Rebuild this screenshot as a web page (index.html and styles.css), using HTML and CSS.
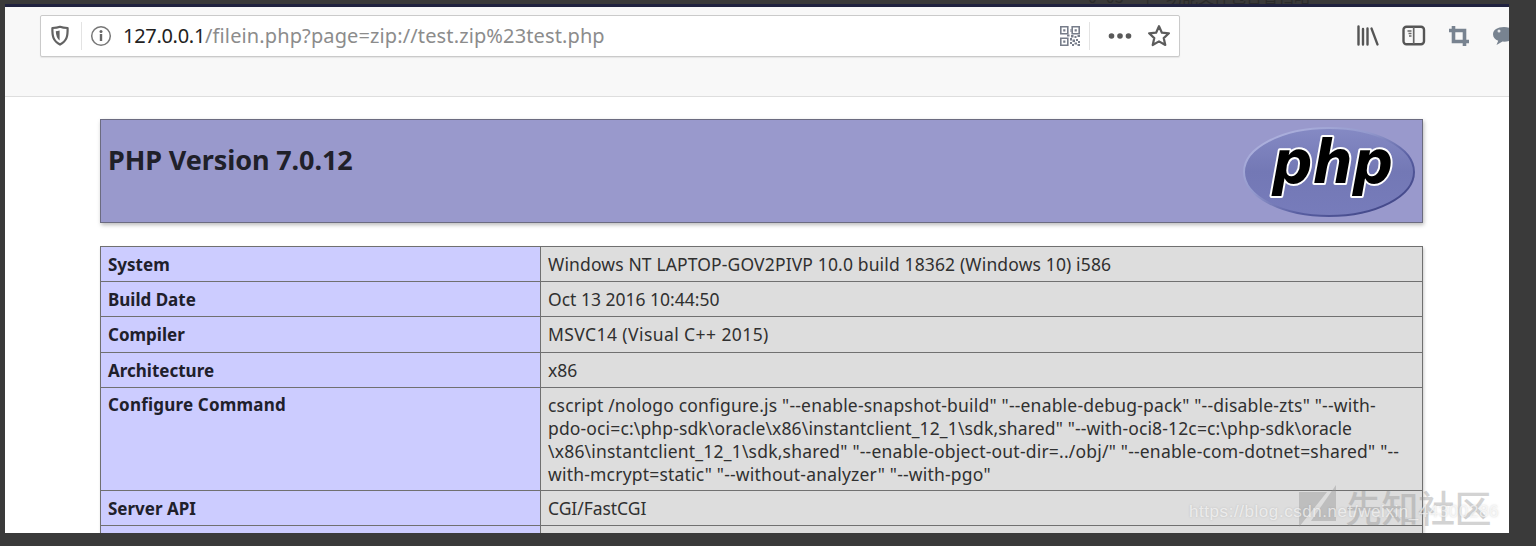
FILE: index.html
```html
<!DOCTYPE html>
<html lang="en">
<head>
<meta charset="utf-8">
<title>phpinfo()</title>
<link rel="stylesheet" href="styles.css">
</head>
<body>
<div class="desktop">
  <div class="backdrop"><span class="bd1">0_03</span><span class="bd2">|</span><span class="bd3">功能文件包含省扫略</span></div>
  <div class="window">
    <header class="toolbar">
      <div class="urlbar">
        <svg class="shield" width="20" height="22" viewBox="0 0 20 22"><path d="M10 1.8 C7.5 2.8 5 3 2.4 3 C2.2 11 3 16 10 19.6 C17 16 17.800 11 17.600 3 C15 3 12.500 2.800 10 1.800Z" fill="none" stroke="#626262" stroke-width="2.200" stroke-linejoin="round"/><path d="M9.600 5.500 Q7.500 6.200 5.800 6.300 Q6 13 9.600 15.500Z" fill="#626262"/></svg>
        <i class="sep sep1"></i>
        <svg class="info" width="22" height="22" viewBox="0 0 22 22"><circle cx="11" cy="11" r="9.300" fill="none" stroke="#777" stroke-width="1.500"/><circle cx="11" cy="6.500" r="1.500" fill="#666"/><path d="M11 9v7" fill="none" stroke="#666" stroke-width="2.400"/></svg>
        <span class="url"><b>127.0.0.1</b>/filein.php?page=zip://test.zip%23test.php</span>
        <svg class="qr" width="22" height="22" viewBox="0 0 22 22"><g fill="none" stroke="#777d8a" stroke-width="1.600"><path d="M1.800 1.800h7v7h-7zM13.200 1.800h7v7h-7zM1.800 13.200h7v7h-7z"/></g><path fill="#777d8a" d="M4.200 4.200h2.200v2.200H4.200zM15.600 4.200h2.200v2.200h-2.200zM4.200 15.600h2.200v2.200H4.200zM8 9.500h2.500v2H8zM11.500 4h1v3h-1zM12 10h2.500v2.500H12zM15.500 11h2v2h-2zM18.500 10h2.500v2h-2.500zM11 13h2v2.500h-2zM13.500 14.500h2.500V17h-2.500zM17 14h2v2h-2zM19 16h2v2h-2zM11 17h2v2h-2zM15.500 17.500h2.500v2h-2.500zM13 19h2v2h-2zM18.500 19h2.500v2h-2.500z"/></svg>
        <i class="sep sep2"></i>
        <svg class="dots" width="26" height="8" viewBox="0 0 26 8"><g fill="#595959"><circle cx="4.500" cy="4" r="2.800"/><circle cx="13" cy="4" r="2.800"/><circle cx="21.500" cy="4" r="2.800"/></g></svg>
        <svg class="star" width="24" height="24" viewBox="0 0 24 24"><path d="M12 2.200 L14.900 8.700 L21.900 9.300 L16.700 14.100 L18.300 21 L12 17.400 L5.700 21 L7.300 14.100 L2.100 9.300 L9.100 8.700Z" fill="none" stroke="#5c5c5c" stroke-width="2.200" stroke-linejoin="round"/></svg>
      </div>
      <div class="tools">
        <svg class="lib" width="24" height="22" viewBox="0 0 24 22"><path d="M2.500 1.500v18M7 4v15.500M11.500 3.500v16" stroke="#555" stroke-width="2.400" stroke-linecap="round"/><path d="M15.500 3.500 L21.500 19.500" stroke="#555" stroke-width="2.300" stroke-linecap="round"/></svg>
        <svg class="side" width="24" height="22" viewBox="0 0 24 22"><rect x="1.500" y="1.800" width="20.500" height="17.400" rx="3" fill="none" stroke="#555" stroke-width="2.400"/><path d="M11.700 2v17" stroke="#666" stroke-width="1.700"/><path d="M5.500 6h4M6.500 8.500h3M7 11h2.500" stroke="#666" stroke-width="1.300"/></svg>
        <svg class="crop" width="22" height="22" viewBox="0 0 22 22"><path d="M1 5.500h15.500V21M5.500 1v15.500H21" fill="none" stroke="#788390" stroke-width="3.600"/></svg>
        <svg class="chat" width="24" height="22" viewBox="0 0 24 22"><path d="M12 2C5.500 2 1 5 1 9.200c0 3.200 2.200 5.500 5.200 6.500L4.500 20l6-3.400C18 17 23 14 23 9.200S18 2 12 2z" fill="#788390"/><circle cx="7" cy="6" r="1.500" fill="#e4e6e9"/></svg>
      </div>
    </header>
    <main class="page">
      <section class="banner">
        <h1><span class="title">PHP Version 7.0.12</span></h1>
        <svg class="logo" width="174" height="94" viewBox="0 0 174 94">
          <defs>
            <linearGradient id="rim" x1="0" y1="0" x2="1" y2="1"><stop offset="0" stop-color="#b9bce5"/><stop offset=".4" stop-color="#9298cc"/><stop offset=".65" stop-color="#575da0"/><stop offset="1" stop-color="#393d7d"/></linearGradient>
            <linearGradient id="face" x1="0" y1="0" x2="0" y2="1"><stop offset="0" stop-color="#858ac4"/><stop offset=".5" stop-color="#7378b5"/><stop offset="1" stop-color="#777cbb"/></linearGradient>
          </defs>
          <ellipse cx="87" cy="47" rx="85" ry="44" fill="url(#face)" stroke="url(#rim)" stroke-width="2"/>
          <text class="wordmark" x="30" y="58" textLength="121" lengthAdjust="spacingAndGlyphs">php</text>
        </svg>
      </section>
      <table class="info-table">
        <tr><th><span class="k1">System</span></th><td><span class="v1">Windows NT LAPTOP-GOV2PIVP 10.0 build 18362 (Windows 10) i586</span></td></tr>
        <tr><th><span class="k2">Build Date</span></th><td><span class="v2">Oct 13 2016 10:44:50</span></td></tr>
        <tr><th><span class="k3">Compiler</span></th><td><span class="v3">MSVC14 (Visual C++ 2015)</span></td></tr>
        <tr><th><span class="k4">Architecture</span></th><td><span class="v4">x86</span></td></tr>
        <tr class="tall"><th><span class="k5">Configure Command</span></th><td><span class="c1">cscript /nologo configure.js "--enable-snapshot-build" "--enable-debug-pack" "--disable-zts" "--with-</span><br><span class="c2">pdo-oci=c:\php-sdk\oracle\x86\instantclient_12_1\sdk,shared" "--with-oci8-12c=c:\php-sdk\oracle</span><br><span class="c3">\x86\instantclient_12_1\sdk,shared" "--enable-object-out-dir=../obj/" "--enable-com-dotnet=shared" "--</span><br><span class="c4">with-mcrypt=static" "--without-analyzer" "--with-pgo"</span></td></tr>
        <tr><th><span class="k6">Server API</span></th><td><span class="v6">CGI/FastCGI</span></td></tr>
        <tr><th></th><td></td></tr>
      </table>
    </main>
  </div>
  <div class="community">
    <svg width="38" height="44" viewBox="0 0 38 44"><path d="M0 7h28L0 42zM37 0v36H12z" fill="#929292"/></svg>
    <span>先知社区</span>
  </div>
  <div class="blogmark">https://blog.csdn.net/weixin_44300286</div>
</div>
</body>
</html>
```
FILE: styles.css
```css
* { box-sizing: border-box; }
body { margin: 0; font-family: "Noto Sans", "Open Sans", "Noto Sans CJK SC", sans-serif; }
.desktop { position: relative; width: 1536px; height: 546px; padding: 4px 27px 13px 5px; background: #3a3a3a; overflow: hidden; }
.backdrop { position: absolute; left: 1088px; top: -12px; height: 16px; overflow: hidden; display: flex; font: 16px/16px "Noto Sans CJK SC", sans-serif; color: #2b2b2b; white-space: nowrap; }
.bd2 { margin-left: 22px; }
.bd3 { margin-left: 16px; }
.window { width: 1504px; height: 529px; border-top: 3px solid #20223f; background: #fff; overflow: hidden; }
.toolbar { display: flex; height: 90px; padding: 8px 0 0 35px; background: #f8f8f8; border-bottom: 1px solid #dedede; }
.urlbar { display: flex; align-items: center; flex: none; width: 1140px; height: 42px; padding-left: 9px; background: #fff; border: 1px solid #cacaca; border-radius: 2px; box-shadow: 0 1px 1px #e5e5e5; }
.urlbar svg, .sep, .tools svg { flex: none; }
.sep { width: 1px; height: 28px; background: #e3e3e3; }
.sep1 { margin: 0 8px 0 11px; }
.sep2 { margin-left: 8px; }
.url { flex: none; width: 936px; margin-left: 11px; font-size: 20px; line-height: 28px; color: #8c8c8c; white-space: nowrap; letter-spacing: 0.120px; }
.url b { font-weight: 400; color: #222; letter-spacing: -0.300px; }
.dots { margin-left: 17px; }
.star { margin-left: 14px; }
.tools { display: flex; align-items: flex-start; gap: 22px; padding: 10px 0 0 176px; flex: none; }
.page { width: 1323px; margin: 22px 0 0 95px; }
.banner { display: flex; justify-content: space-between; height: 104px; padding: 5px 6px 0 7px; border: 1px solid #6b6b80; background: #99c; box-shadow: 1px 2px 4px #bbb; }
h1 { margin: 17px 0 0; font-size: 27px; line-height: 36px; font-weight: 700; color: #202029; white-space: nowrap; letter-spacing: -0.100px; }
.wordmark { font: italic 700 60px "DejaVu Sans", sans-serif; fill: #000; stroke: #fff; stroke-width: 4px; paint-order: stroke; stroke-linejoin: round; }
.info-table { width: 1323px; margin-top: 23px; border-collapse: collapse; table-layout: fixed; box-shadow: 1px 2px 3px #ccc; }
.info-table tr { height: 35.200px; }
.info-table .tall { height: 103px; }
.info-table th, .info-table td { padding: 6px 7px 5px; border: 1px solid #707070; vertical-align: top; font-size: 17px; line-height: 23px; text-align: left; white-space: nowrap; }
.info-table th { width: 440px; background: #ccf; color: #20202b; }
.info-table td { background: #ddd; color: #303030; font-size: 17.500px; }
.info-table .tall td, .info-table .tall th { padding: 6.500px 7px 4px; line-height: 22.800px; }
.v1 { letter-spacing: 0.140px; }
.v3 { letter-spacing: 0.420px; }
.v6 { letter-spacing: -0.050px; }
.k5 { letter-spacing: 0.200px; }
.c1, .c3, .c4 { letter-spacing: 0.200px; }
.c2 { letter-spacing: 0.140px; }
.community { position: absolute; left: 1299px; top: 485px; display: flex; opacity: .4; color: #929292; font: 500 37px/44px "Noto Sans CJK SC", sans-serif; }
.community span { margin-left: 8px; letter-spacing: -0.500px; white-space: nowrap; }
.blogmark { position: absolute; left: 1189px; top: 501px; font: 17px/22px "Liberation Sans", sans-serif; letter-spacing: 0.560px; color: rgba(255,255,255,.65); text-shadow: 0 0 2px rgba(130,130,130,.35); white-space: nowrap; }
```
